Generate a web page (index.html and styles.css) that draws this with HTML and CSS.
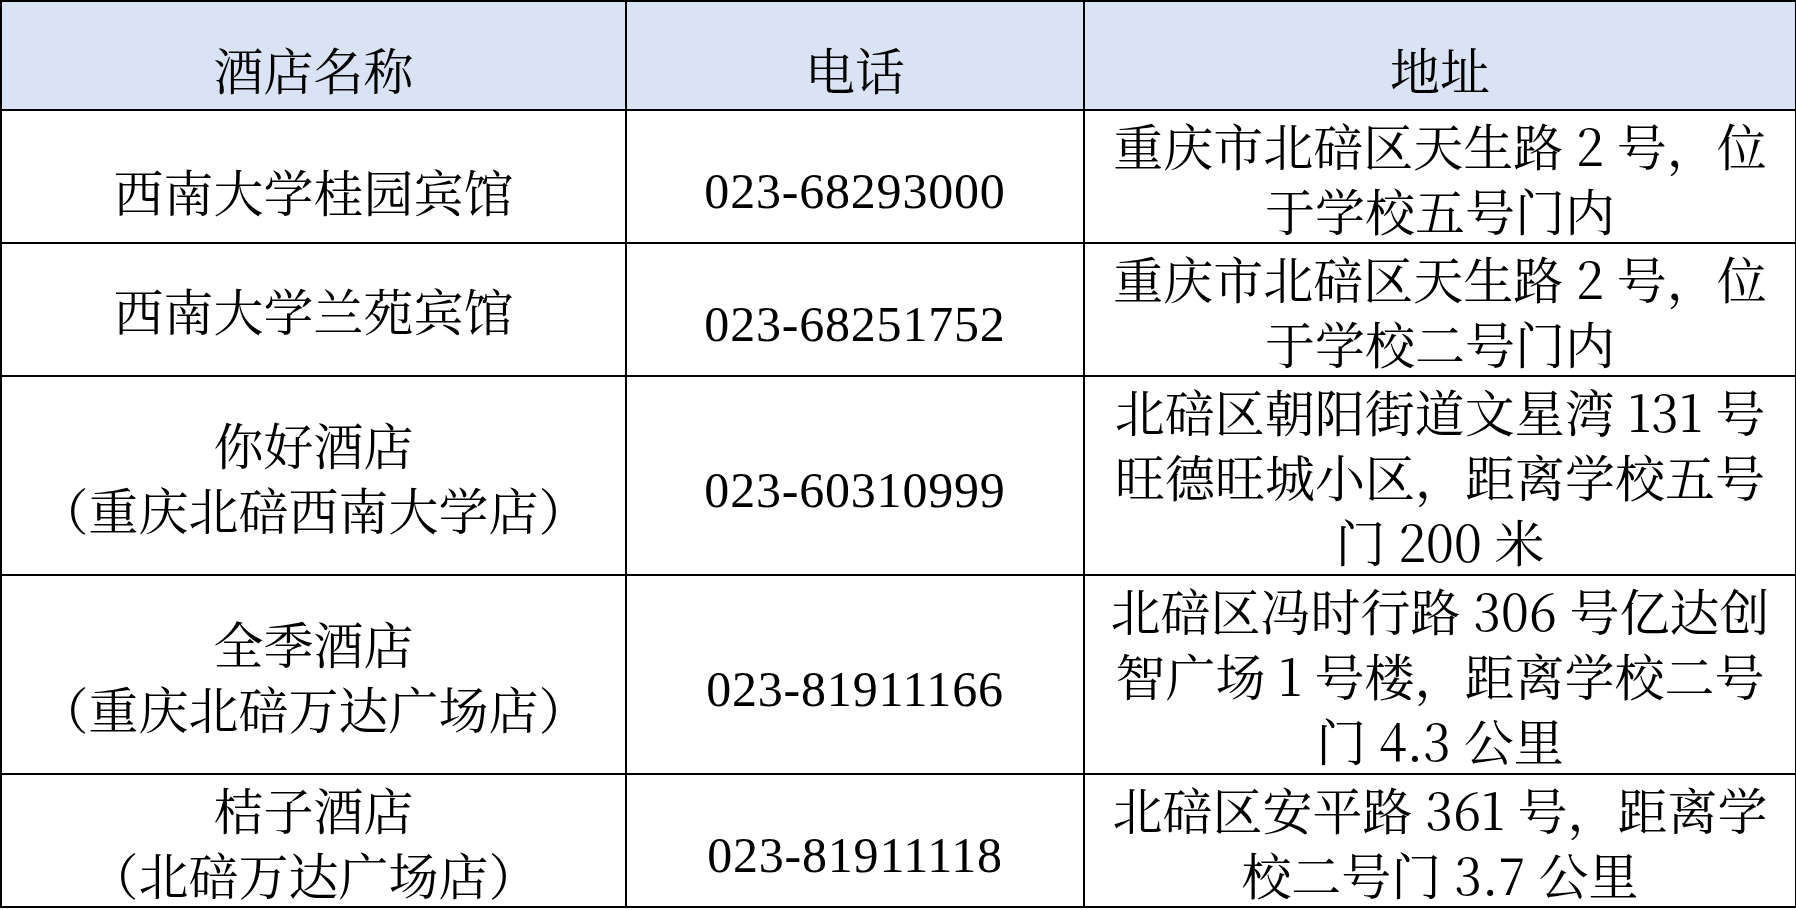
FILE: index.html
```html
<!DOCTYPE html>
<html lang="zh-CN">
<head>
<meta charset="utf-8">
<title>酒店信息</title>
<link rel="stylesheet" href="styles.css">
</head>
<body>
<table class="hotels">
  <colgroup>
    <col class="c-name">
    <col class="c-phone">
    <col class="c-addr">
  </colgroup>
  <thead>
    <tr class="r-head">
      <th>酒店名称</th>
      <th>电话</th>
      <th>地址</th>
    </tr>
  </thead>
  <tbody>
    <tr class="r-short">
      <td class="low">西南大学桂园宾馆</td>
      <td class="phone">023-68293000</td>
      <td>重庆市北碚区天生路 2 号，位<br>于学校五号门内</td>
    </tr>
    <tr class="r-short">
      <td>西南大学兰苑宾馆</td>
      <td class="phone">023-68251752</td>
      <td>重庆市北碚区天生路 2 号，位<br>于学校二号门内</td>
    </tr>
    <tr class="r-tall">
      <td>你好酒店<br>（重庆北碚西南大学店）</td>
      <td class="phone">023-60310999</td>
      <td>北碚区朝阳街道文星湾 131 号<br>旺德旺城小区，距离学校五号<br>门 200 米</td>
    </tr>
    <tr class="r-tall">
      <td>全季酒店<br>（重庆北碚万达广场店）</td>
      <td class="phone">023-81911166</td>
      <td>北碚区冯时行路 306 号亿达创<br>智广场 1 号楼，距离学校二号<br>门 4.3 公里</td>
    </tr>
    <tr class="r-short">
      <td>桔子酒店<br>（北碚万达广场店）</td>
      <td class="phone">023-81911118</td>
      <td>北碚区安平路 361 号，距离学<br>校二号门 3.7 公里</td>
    </tr>
  </tbody>
</table>
</body>
</html>
```

FILE: styles.css
```css
html, body {
  margin: 0;
  padding: 0;
  background: #ffffff;
}

.hotels {
  border-collapse: collapse;
  table-layout: fixed;
  width: 1795px;
  font-family: "Noto Serif CJK SC", "Liberation Serif", "Noto Sans CJK SC", serif;
  font-size: 50px;
  line-height: 65px;
  color: #000000;
}

.c-name { width: 625px; }
.c-phone { width: 458px; }
.c-addr { width: 712px; }

.hotels th,
.hotels td {
  border: 2px solid #000000;
  padding: 0;
  text-align: center;
  vertical-align: middle;
  font-weight: normal;
  white-space: nowrap;
}

.hotels th {
  background: #dae3f3;
  padding-top: 26px;
}

.r-head { height: 109px; }
.r-short { height: 133px; }
.r-tall { height: 199px; }

.hotels td.phone {
  padding-top: 30px;
  font-family: "Liberation Serif", serif;
  letter-spacing: 0.8px;
}

.hotels td.low {
  padding-top: 28px;
}
```
